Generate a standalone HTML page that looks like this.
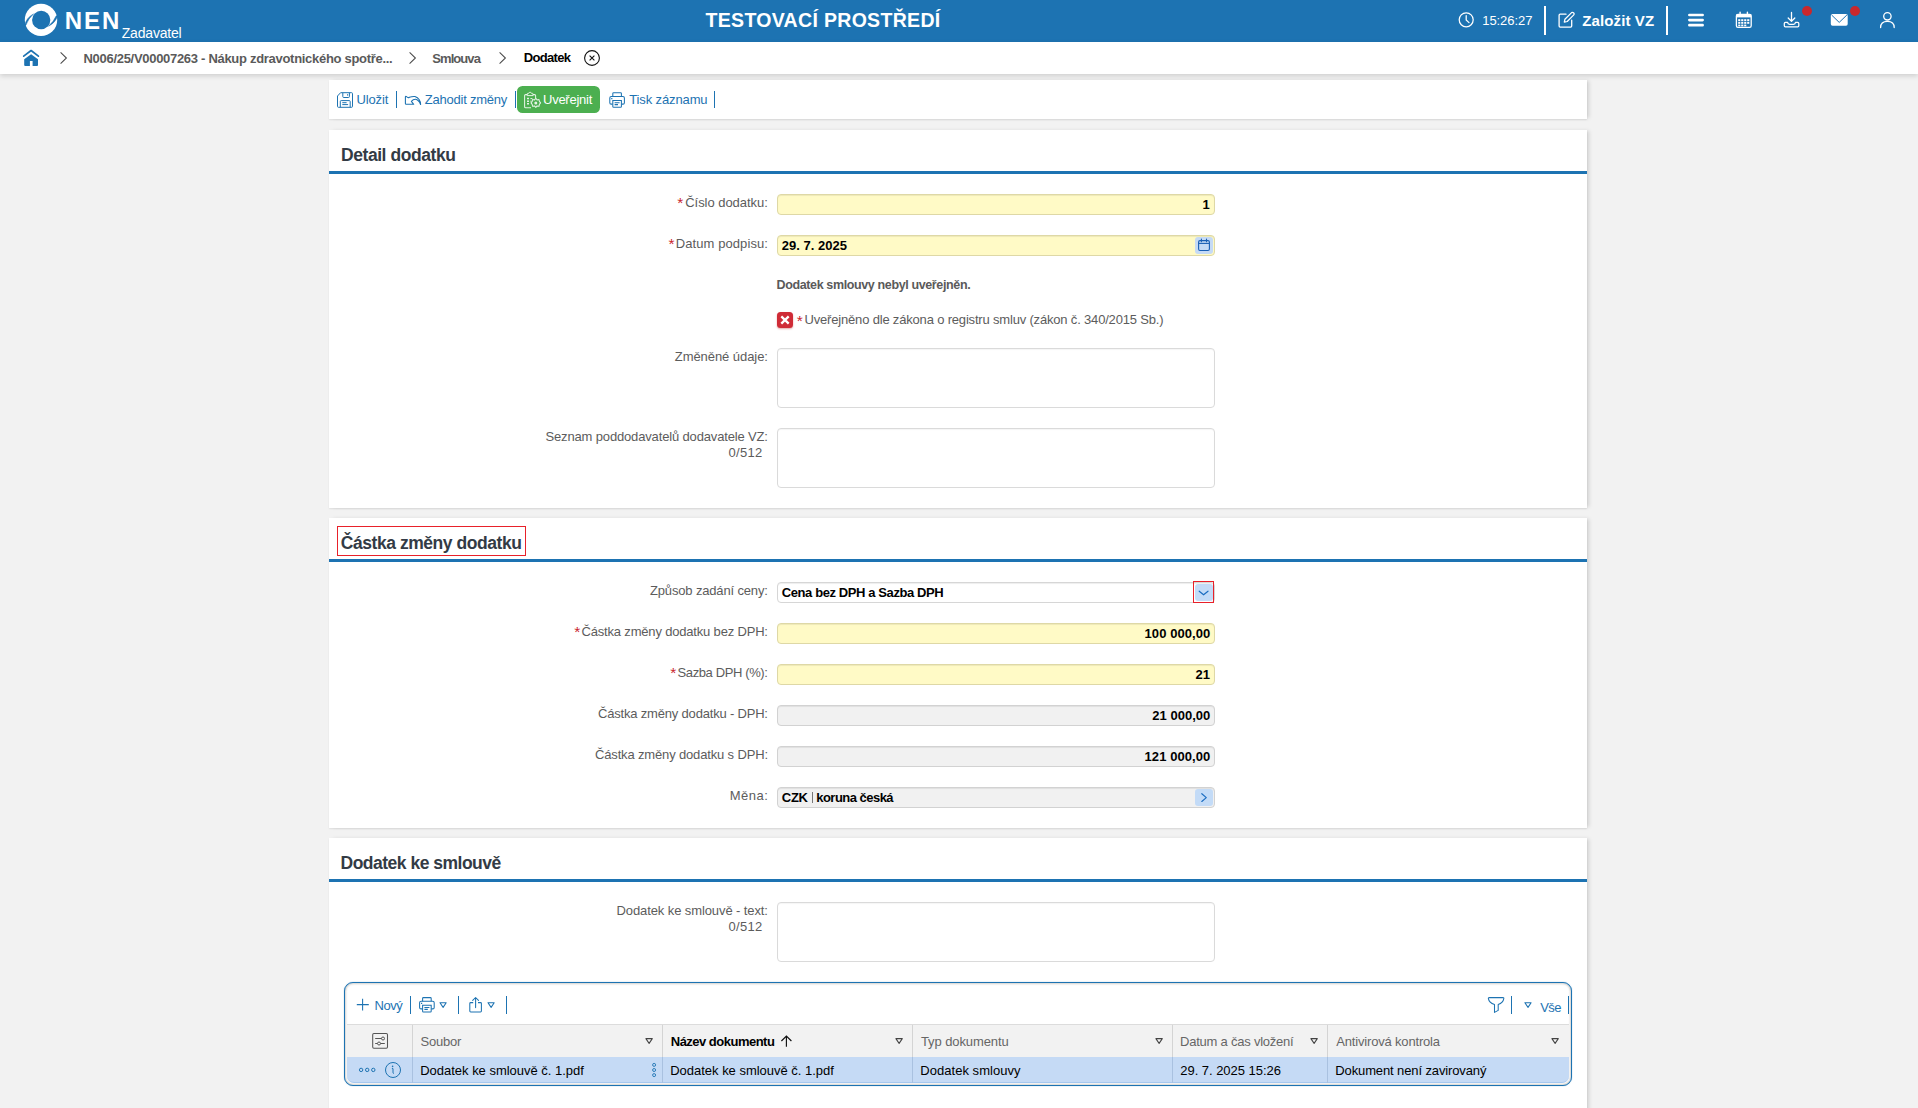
<!DOCTYPE html>
<html lang="cs">
<head>
<meta charset="utf-8">
<title>NEN - Dodatek</title>
<style>
*{box-sizing:border-box;margin:0;padding:0}
html,body{width:1918px;height:1108px;overflow:hidden}
body{background:#f2f2f2;font-family:"Liberation Sans",sans-serif;font-size:13px;color:#555;position:relative}
.a{position:absolute}
.t{position:absolute;white-space:pre;line-height:1;font-family:"Liberation Sans",sans-serif}
svg{position:absolute;overflow:visible}
#hdr{position:absolute;left:0;top:0;width:1918px;height:41.7px;background:#1d73b2}
#bc{position:absolute;left:0;top:41.7px;width:1918px;height:32px;background:#fff;box-shadow:0 2px 5px rgba(0,0,0,.15)}
.panel{position:absolute;left:329px;width:1258px;background:#fff;box-shadow:3px 0 4px -1px rgba(0,0,0,.14),0 1px 1.5px rgba(0,0,0,.08)}
.pline{position:absolute;left:329px;width:1258px;height:3px;background:#1d73b2}
.inp{position:absolute;left:777px;width:438px;height:21px;border:1px solid #d6d6d6;border-radius:4px;background:#fff;box-shadow:inset 0 1px 1px rgba(0,0,0,.07)}
.inp.y{background:#fffac6;border-color:#ded8a6}
.inp.g{background:#f1f1f1;border-color:#d2d2d2}
.ta{position:absolute;left:777px;width:438px;height:60px;border:1px solid #dadada;border-radius:4px;background:#fff;box-shadow:inset 0 1px 1px rgba(0,0,0,.04)}
.vs{position:absolute;width:1px;background:#1d73b2}
.hs{position:absolute;width:2px;background:#fff;top:6px;height:29px}
.cs{position:absolute;width:1px;background:#d4d4d4;top:1025px;height:32px}
.rs{position:absolute;width:1px;background:#a9c1e0;top:1057px;height:26px}
</style>
</head>
<body>
<div id="hdr"></div>
<div id="bc"></div>
<div class="hs" style="left:1544px"></div>
<div class="hs" style="left:1666px"></div>

<!-- toolbar -->
<div class="panel" style="top:80px;height:39px"></div>
<div class="vs" style="left:396px;top:91px;height:17px"></div>
<div class="vs" style="left:515px;top:91px;height:17px"></div>
<div class="vs" style="left:714px;top:91px;height:17px"></div>
<div class="a" style="left:517px;top:85.7px;width:83px;height:27.2px;border-radius:5.5px;background:#4caf50"></div>

<!-- panel 1 -->
<div class="panel" style="top:130px;height:378px"></div>
<div class="pline" style="top:171px"></div>
<div class="inp y" style="top:194px"></div>
<div class="inp y" style="top:235px"></div>
<div class="a" style="left:777px;top:312px;width:16px;height:16px;border-radius:3.5px;background:#cf2b36;box-shadow:0 1px 2px rgba(180,0,0,.35)"></div>
<div class="ta" style="top:348px"></div>
<div class="ta" style="top:428px"></div>

<!-- panel 2 -->
<div class="panel" style="top:518px;height:310px"></div>
<div class="pline" style="top:559px"></div>
<div class="a" style="left:337px;top:526px;width:189px;height:29.5px;border:1px solid #e8212a"></div>
<div class="inp" style="top:582px"></div>
<div class="inp y" style="top:623px"></div>
<div class="inp y" style="top:664px"></div>
<div class="inp g" style="top:705px"></div>
<div class="inp g" style="top:746px"></div>
<div class="inp g" style="top:787px"></div>
<div class="a" style="left:1194.5px;top:584px;width:18px;height:17px;border-radius:3px;background:#c3dbf7"></div>
<div class="a" style="left:1193px;top:581px;width:21px;height:22px;border:1px solid #e8212a"></div>
<div class="a" style="left:1195px;top:789px;width:18px;height:17px;border-radius:3px;background:#c3dbf7"></div>
<div class="a" style="left:811.5px;top:792px;width:1px;height:11px;background:#777"></div>

<!-- panel 3 -->
<div class="panel" style="top:838px;height:290px"></div>
<div class="pline" style="top:879px"></div>
<div class="ta" style="top:902px"></div>

<!-- grid -->
<div class="a" style="left:344px;top:982px;width:1228px;height:104px;border:1px solid #1d73b2;border-radius:9px;background:#fff;box-shadow:inset 0 0 1.5px 1.2px rgba(120,110,100,.28),0 0 1px rgba(29,115,178,.7)"></div>
<div class="a" style="left:347px;top:1024px;width:1222px;height:33px;background:#f2f2f2;border-top:1px solid #dcdcdc"></div>
<div class="a" style="left:347px;top:1057px;width:1222px;height:26.3px;background:#c5daf5;border-bottom:1.3px solid #a6c8ef;border-radius:0 0 7px 7px"></div>
<div class="cs" style="left:412px"></div><div class="cs" style="left:662px"></div><div class="cs" style="left:912px"></div><div class="cs" style="left:1172px"></div><div class="cs" style="left:1327px"></div>
<div class="rs" style="left:412px"></div><div class="rs" style="left:662px"></div><div class="rs" style="left:912px"></div><div class="rs" style="left:1172px"></div><div class="rs" style="left:1327px"></div>
<div class="vs" style="left:410px;top:996px;height:18px"></div>
<div class="vs" style="left:458px;top:996px;height:18px"></div>
<div class="vs" style="left:506px;top:996px;height:18px"></div>
<div class="vs" style="left:1511px;top:996px;height:18px"></div>
<div class="vs" style="left:1568px;top:996px;height:18px"></div>
<!-- logo -->
<svg style="left:24px;top:3px" width="34" height="34" viewBox="24 3 34 34">
 <circle cx="41" cy="19.9" r="16.2" fill="#fff"/>
 <circle cx="41.2" cy="20" r="9.15" fill="#1d73b2"/>
 <path d="M24.3,26.2 Q26.2,17.6 33.6,13.9 Q28.2,18.6 25.9,25.2 Z" fill="#1d73b2" stroke="#1d73b2" stroke-width=".5"/>
 <path d="M57.7,15.4 Q55.8,22.6 48.4,26.3 Q53.8,21.6 56.1,16 Z" fill="#1d73b2" stroke="#1d73b2" stroke-width=".5"/>
</svg>
<!-- home -->
<svg style="left:22px;top:48px" width="18" height="19" viewBox="22 48 18 19">
 <path d="M23.7,56.2 L31.1,50.5 L38.4,56.2" fill="none" stroke="#1d73b2" stroke-width="1.7" stroke-linecap="round" stroke-linejoin="round"/>
 <path d="M31.1,54.2 L38,59.3 V65 Q38,65.9 37.1,65.9 H32.6 V61 H29.9 V65.9 H25.1 Q24.2,65.9 24.2,65 V59.3 Z" fill="#1d73b2"/>
</svg>
<!-- breadcrumb chevrons -->
<svg style="left:59px;top:51px" width="9" height="14" viewBox="0 0 9 14"><path d="M1.6,1.4 L7.4,7 L1.6,12.6" fill="none" stroke="#4a4a4a" stroke-width="1.05"/></svg>
<svg style="left:407.7px;top:51px" width="9" height="14" viewBox="0 0 9 14"><path d="M1.6,1.4 L7.4,7 L1.6,12.6" fill="none" stroke="#4a4a4a" stroke-width="1.05"/></svg>
<svg style="left:497.5px;top:51px" width="9" height="14" viewBox="0 0 9 14"><path d="M1.6,1.4 L7.4,7 L1.6,12.6" fill="none" stroke="#4a4a4a" stroke-width="1.05"/></svg>
<!-- close circle -->
<svg style="left:583px;top:49px" width="18" height="18" viewBox="0 0 18 18"><circle cx="9" cy="9" r="7.4" fill="none" stroke="#111" stroke-width="1.1"/><path d="M6.6,6.6 L11.4,11.4 M11.4,6.6 L6.6,11.4" stroke="#111" stroke-width="1.1" fill="none"/></svg>

<!-- clock -->
<svg style="left:1457px;top:11px" width="18" height="18" viewBox="0 0 18 18"><circle cx="9.2" cy="8.8" r="7" fill="none" stroke="#fff" stroke-width="1.25"/><path d="M9.2,4.6 V9 L12,11.6" fill="none" stroke="#fff" stroke-width="1.25" stroke-linecap="round" stroke-linejoin="round"/></svg>
<!-- edit -->
<svg style="left:1557px;top:11px" width="19" height="18" viewBox="1557 11 19 18">
 <path d="M1566,14.2 H1560.2 Q1559.1,14.2 1559.1,15.3 V26 Q1559.1,27.1 1560.2,27.1 H1570.6 Q1571.7,27.1 1571.7,26 V20.2" fill="none" stroke="#fff" stroke-width="1.3" stroke-linecap="round"/>
 <path d="M1564.3,22.2 L1564.9,19.3 L1571.6,12.6 Q1572.5,11.9 1573.4,12.7 L1573.9,13.2 Q1574.6,14.1 1573.8,14.9 L1567.2,21.5 Z" fill="none" stroke="#fff" stroke-width="1.25" stroke-linejoin="round"/>
</svg>
<!-- hamburger -->
<svg style="left:1688px;top:13px" width="16" height="14" viewBox="0 0 16 14"><path d="M1.4,2 H14.6 M1.4,7.1 H14.6 M1.4,12.2 H14.6" stroke="#fff" stroke-width="2.7" stroke-linecap="round"/></svg>
<!-- calendar -->
<svg style="left:1735px;top:11px" width="18" height="18" viewBox="1735 11 18 18">
 <rect x="1736.4" y="14.4" width="14.8" height="13" rx="1.6" fill="none" stroke="#fff" stroke-width="1.3"/>
 <path d="M1740.1,12.1 V16 M1747.4,12.1 V16" stroke="#fff" stroke-width="1.4" stroke-linecap="round"/>
 <path d="M1736.4,15.9 H1751.2" stroke="#fff" stroke-width="3"/>
 <g fill="#fff"><rect x="1738.2" y="19.2" width="2.1" height="1.9"/><rect x="1741.2" y="19.2" width="2.1" height="1.9"/><rect x="1744.2" y="19.2" width="2.1" height="1.9"/><rect x="1747.2" y="19.2" width="2.1" height="1.9"/>
 <rect x="1738.2" y="21.9" width="2.1" height="1.9"/><rect x="1741.2" y="21.9" width="2.1" height="1.9"/><rect x="1744.2" y="21.9" width="2.1" height="1.9"/><rect x="1747.2" y="21.9" width="2.1" height="1.9"/>
 <rect x="1738.2" y="24.6" width="2.1" height="1.7"/><rect x="1741.2" y="24.6" width="2.1" height="1.7"/><rect x="1744.2" y="24.6" width="2.1" height="1.7"/></g>
</svg>
<!-- download tray -->
<svg style="left:1783px;top:11px" width="18" height="18" viewBox="1783 11 18 18">
 <path d="M1791.5,12.4 V21.2 M1788.2,18 L1791.5,21.4 L1794.8,18" fill="none" stroke="#fff" stroke-width="1.3" stroke-linecap="round" stroke-linejoin="round"/>
 <path d="M1787.6,22.3 H1785.4 Q1784.3,22.3 1784.3,23.4 V25.8 Q1784.3,26.9 1785.4,26.9 H1797.7 Q1798.8,26.9 1798.8,25.8 V23.4 Q1798.8,22.3 1797.7,22.3 H1795.5 Q1795.3,24.3 1793.6,24.3 H1789.5 Q1787.8,24.3 1787.6,22.3 Z" fill="none" stroke="#fff" stroke-width="1.25" stroke-linejoin="round"/>
</svg>
<div class="a" style="left:1801.7px;top:6px;width:10.2px;height:10.2px;border-radius:50%;background:#c9282d"></div>
<!-- mail -->
<svg style="left:1830px;top:13px" width="19" height="14" viewBox="1830 13 19 14">
 <rect x="1830.8" y="14.1" width="16.9" height="11.6" rx="1.7" fill="#fff"/>
 <path d="M1831.6,15 L1839.2,22.4 L1846.9,15" fill="none" stroke="#1d73b2" stroke-width="1"/>
</svg>
<div class="a" style="left:1849.7px;top:6px;width:10.2px;height:10.2px;border-radius:50%;background:#c9282d"></div>
<!-- user -->
<svg style="left:1879px;top:11px" width="17" height="18" viewBox="1879 11 17 18">
 <circle cx="1887.4" cy="16.3" r="3.7" fill="none" stroke="#fff" stroke-width="1.3"/>
 <path d="M1880.6,27.6 Q1880.6,21.4 1887.4,21.4 Q1894.2,21.4 1894.2,27.6" fill="none" stroke="#fff" stroke-width="1.3" stroke-linecap="round"/>
</svg>

<!-- save -->
<svg style="left:336px;top:91px" width="18" height="18" viewBox="336 91 18 18">
 <path d="M337.5,96 L340.6,92.7 H351.6 Q352.5,92.7 352.5,93.6 V106.4 Q352.5,107.3 351.6,107.3 H338.4 Q337.5,107.3 337.5,106.4 Z" fill="none" stroke="#1d73b2" stroke-width="1"/>
 <path d="M342.8,92.9 V96.6 Q342.8,97.5 343.7,97.5 H348.5 Q349.4,97.5 349.4,96.6 V92.9" fill="none" stroke="#1d73b2" stroke-width="1"/>
 <path d="M347.6,94.2 V95.6" stroke="#1d73b2" stroke-width="1"/>
 <path d="M340.3,107.2 V101.5 Q340.3,100.6 341.2,100.6 H349.3 Q350.2,100.6 350.2,101.5 V107.2" fill="none" stroke="#1d73b2" stroke-width="1"/>
 <path d="M342.3,102.7 H346.6 M342.3,104.6 H348.1" stroke="#1d73b2" stroke-width="1"/>
</svg>
<!-- undo -->
<svg style="left:404px;top:94px" width="18" height="12" viewBox="404 94 18 12">
 <path d="M405.4,97 Q405.4,96.1 406.2,96.4 L407.5,97.4 Q408.4,98 409.4,97.2 Q412,96.3 415,96.5 Q420.4,98.4 420.6,104.5 Q418.6,99.7 415.5,99.3 Q413.2,99.2 411.4,101.3 L413.7,104.3 H406.1 Q405.4,104.3 405.4,103.6 Z" fill="none" stroke="#1d73b2" stroke-width="1.1" stroke-linejoin="round"/>
</svg>
<!-- clipboard gear -->
<svg style="left:523px;top:91px" width="18" height="18" viewBox="523 91 18 18" opacity=".85">
 <path d="M527.3,94.6 H525.6 Q524.6,94.6 524.6,95.6 V106.8 Q524.6,107.8 525.6,107.8 H531" fill="none" stroke="#fff" stroke-width="1.05"/>
 <path d="M533,94.6 H534.6 Q535.6,94.6 535.6,95.6 V98.2" fill="none" stroke="#fff" stroke-width="1.05"/>
 <path d="M527.2,95.6 V94 Q527.2,93.3 528,93.3 H528.8 Q529.2,92.2 530.1,92.2 Q531,92.2 531.4,93.3 H532.2 Q533,93.3 533,94 V95.6 Z" fill="none" stroke="#fff" stroke-width="1"/>
 <path d="M527,98.6 H529 M527,101.2 H529 M527,103.8 H529" stroke="#fff" stroke-width="1.5"/>
 <path d="M530.4,98.6 H532.4 M530.4,101.2 H531.4" stroke="#fff" stroke-width="1"/>
 <path d="M535.8,98.4 L537.1,99.9 L539,99.5 L539.4,101.4 L540.6,102.9 L539.4,104.4 L539,106.3 L537.1,105.9 L535.8,107.4 L534.5,105.9 L532.6,106.3 L532.2,104.4 L531,102.9 L532.2,101.4 L532.6,99.5 L534.5,99.9 Z" fill="none" stroke="#fff" stroke-width="1.05" stroke-linejoin="round"/>
 <circle cx="535.8" cy="102.9" r="1.5" fill="#fff"/>
</svg>
<!-- printer (toolbar) -->
<svg style="left:608px;top:91px" width="18" height="18" viewBox="608 91 18 18">
 <g fill="none" stroke="#1d73b2" stroke-width="1.05">
 <path d="M612.8,96.4 V93.6 Q612.8,92.8 613.6,92.8 H620.6 Q621.4,92.8 621.4,93.6 V96.4"/>
 <path d="M612.8,104.1 H611.2 Q609.8,104.1 609.8,102.7 V98 Q609.8,96.5 611.3,96.5 H622.9 Q624.4,96.5 624.4,98 V102.7 Q624.4,104.1 623,104.1 H621.4"/>
 <path d="M612.8,100.5 H621.4 V106.4 Q621.4,107.2 620.6,107.2 H613.6 Q612.8,107.2 612.8,106.4 Z" fill="#fff"/>
 <path d="M614.6,102.7 H619.6 M614.6,104.6 H618"/>
 <path d="M611.2,98.6 H612.4"/>
 </g>
</svg>
<!-- printer (grid) -->
<svg style="left:418px;top:996px" width="18" height="18" viewBox="608.2 91.2 18 18"><g fill="none" stroke="#1d73b2" stroke-width="1.05">
 <path d="M612.8,96.4 V93.6 Q612.8,92.8 613.6,92.8 H620.6 Q621.4,92.8 621.4,93.6 V96.4"/>
 <path d="M612.8,104.1 H611.2 Q609.8,104.1 609.8,102.7 V98 Q609.8,96.5 611.3,96.5 H622.9 Q624.4,96.5 624.4,98 V102.7 Q624.4,104.1 623,104.1 H621.4"/>
 <path d="M612.8,100.5 H621.4 V106.4 Q621.4,107.2 620.6,107.2 H613.6 Q612.8,107.2 612.8,106.4 Z" fill="#fff"/>
 <path d="M614.6,102.7 H619.6 M614.6,104.6 H618"/>
 <path d="M611.2,98.6 H612.4"/>
 </g></svg>

<!-- date calendar btn -->
<div class="a" style="left:1195.2px;top:237px;width:17.7px;height:17px;border-radius:3px;background:#c5daf5"></div>
<svg style="left:1196px;top:237px" width="16" height="16" viewBox="1196 237 16 16">
 <rect x="1198.6" y="240.6" width="10.8" height="9.9" rx="1.4" fill="none" stroke="#1a5fb4" stroke-width="1.1"/>
 <path d="M1198.6,243.4 H1209.4" stroke="#1a5fb4" stroke-width="1.1"/>
 <path d="M1201.4,239 V241.8 M1206.5,239 V241.8" stroke="#1a5fb4" stroke-width="1.1" stroke-linecap="round"/>
</svg>
<!-- red X -->
<svg style="left:777px;top:312px" width="16" height="16" viewBox="0 0 16 16"><path d="M4.3,4.4 L11.7,11.6 M11.7,4.4 L4.3,11.6" stroke="#fff" stroke-width="2.3"/></svg>
<!-- select chevron down -->
<svg style="left:1196px;top:586px" width="16" height="14" viewBox="1196 586 16 14"><path d="M1199.2,591.2 L1203.6,594.8 L1208,591.2" fill="none" stroke="#1a6cc0" stroke-width="1.15" stroke-linecap="round" stroke-linejoin="round"/></svg>
<!-- currency chevron right -->
<svg style="left:1196px;top:790px" width="16" height="16" viewBox="1196 790 16 16"><path d="M1201.8,793.7 L1206.3,797.6 L1201.8,801.5" fill="none" stroke="#1a6cc0" stroke-width="1.15" stroke-linecap="round" stroke-linejoin="round"/></svg>

<!-- grid toolbar: plus -->
<svg style="left:356px;top:998px" width="14" height="14" viewBox="356 998 14 14"><path d="M356.8,1004.6 H368.8 M362.6,998.8 V1010.5" stroke="#1d73b2" stroke-width="1.05"/></svg>
<!-- triangles -->
<svg style="left:439px;top:1001px" width="9" height="8" viewBox="0 0 9 8"><path d="M1,1.8 H7.2 L4.1,6.4 Z" fill="none" stroke="#1d73b2" stroke-width="1.05" stroke-linejoin="round"/></svg>
<svg style="left:487px;top:1001px" width="9" height="8" viewBox="0 0 9 8"><path d="M1,1.8 H7.2 L4.1,6.4 Z" fill="none" stroke="#1d73b2" stroke-width="1.05" stroke-linejoin="round"/></svg>
<svg style="left:1524px;top:1001px" width="9" height="8" viewBox="0 0 9 8"><path d="M0.9,1.8 H7.1 L4,6.4 Z" fill="none" stroke="#1d73b2" stroke-width="1.05" stroke-linejoin="round"/></svg>
<!-- export -->
<svg style="left:468px;top:996px" width="16" height="18" viewBox="468 996 16 18">
 <path d="M473.2,1002.6 H470.7 Q469.8,1002.6 469.8,1003.5 V1011.1 Q469.8,1012 470.7,1012 H480.5 Q481.4,1012 481.4,1011.1 V1003.5 Q481.4,1002.6 480.5,1002.6 H478" fill="none" stroke="#1d73b2" stroke-width="1.05"/>
 <path d="M475.6,1007.6 V997.6 M472.7,1000.4 L475.6,997.5 L478.5,1000.4" fill="none" stroke="#1d73b2" stroke-width="1.05" stroke-linejoin="round" stroke-linecap="round"/>
</svg>
<!-- filter -->
<svg style="left:1487px;top:996px" width="18" height="18" viewBox="1487 996 18 18">
 <path d="M1489.2,997.6 H1503 Q1504,997.6 1503.8,998.6 Q1503.2,1002.6 1498.2,1004.6 V1010.4 L1494.5,1012.4 V1004.6 Q1489,1002.6 1488.4,998.6 Q1488.2,997.6 1489.2,997.6 Z" fill="none" stroke="#1d73b2" stroke-width="1.05" stroke-linejoin="round"/>
</svg>
<!-- settings -->
<svg style="left:371px;top:1032px" width="18" height="18" viewBox="371 1032 18 18">
 <rect x="372.7" y="1033.5" width="14.8" height="14.8" rx="1.2" fill="none" stroke="#555" stroke-width="1.05"/>
 <path d="M375.2,1038.5 H381.4 M375.2,1043.5 H377.4 M380.6,1043.5 H384.8" stroke="#555" stroke-width="1"/>
 <circle cx="383" cy="1038.5" r="1.5" fill="none" stroke="#555" stroke-width="1"/>
 <circle cx="379" cy="1043.5" r="1.5" fill="none" stroke="#555" stroke-width="1"/>
</svg>
<!-- header filter triangles -->
<svg style="left:645px;top:1037px" width="9" height="8" viewBox="0 0 9 8"><path d="M0.9,1.6 H7.3 L4.1,6.4 Z" fill="none" stroke="#444" stroke-width="1.05" stroke-linejoin="round"/></svg>
<svg style="left:895px;top:1037px" width="9" height="8" viewBox="0 0 9 8"><path d="M0.9,1.6 H7.3 L4.1,6.4 Z" fill="none" stroke="#444" stroke-width="1.05" stroke-linejoin="round"/></svg>
<svg style="left:1155px;top:1037px" width="9" height="8" viewBox="0 0 9 8"><path d="M0.9,1.6 H7.3 L4.1,6.4 Z" fill="none" stroke="#444" stroke-width="1.05" stroke-linejoin="round"/></svg>
<svg style="left:1310px;top:1037px" width="9" height="8" viewBox="0 0 9 8"><path d="M0.9,1.6 H7.3 L4.1,6.4 Z" fill="none" stroke="#444" stroke-width="1.05" stroke-linejoin="round"/></svg>
<svg style="left:1550.5px;top:1037px" width="9" height="8" viewBox="0 0 9 8"><path d="M0.9,1.6 H7.3 L4.1,6.4 Z" fill="none" stroke="#444" stroke-width="1.05" stroke-linejoin="round"/></svg>
<!-- sort arrow -->
<svg style="left:780px;top:1035px" width="13" height="13" viewBox="780 1035 13 13"><path d="M786.4,1046.8 V1036.2 M781.4,1041 L786.4,1036 L791.4,1041" fill="none" stroke="#111" stroke-width="1.15"/></svg>
<!-- row icons -->
<svg style="left:358px;top:1066px" width="18" height="8" viewBox="358 1066 18 8"><g fill="none" stroke="#1d73b2" stroke-width="1"><circle cx="361.1" cy="1069.9" r="1.7"/><circle cx="367.2" cy="1069.9" r="1.7"/><circle cx="373.3" cy="1069.9" r="1.7"/></g></svg>
<svg style="left:384px;top:1061px" width="18" height="18" viewBox="384 1061 18 18"><circle cx="393" cy="1070" r="7.5" fill="none" stroke="#1d73b2" stroke-width="1"/><circle cx="392.6" cy="1066.4" r=".8" fill="#1d73b2"/><path d="M391.9,1068.6 H393 V1072.6 Q393,1073.4 394,1073.4" fill="none" stroke="#1d73b2" stroke-width="1"/></svg>
<svg style="left:651px;top:1062px" width="7" height="16" viewBox="651 1062 7 16"><g fill="none" stroke="#1d73b2" stroke-width=".9"><circle cx="654.1" cy="1064.9" r="1.5"/><circle cx="654.1" cy="1070" r="1.5"/><circle cx="654.1" cy="1075.1" r="1.5"/></g></svg>

<!-- texts -->
<div class="t" style="left:64.75px;top:9.00px;font-size:24px;font-weight:bold;color:#fff;letter-spacing:2.000px;">NEN</div>
<div class="t" style="left:121.75px;top:26.00px;font-size:14px;color:#fff;letter-spacing:-0.188px;">Zadavatel</div>
<div class="t" style="left:705.50px;top:11.00px;font-size:19.5px;font-weight:bold;color:#fff;letter-spacing:0.319px;">TESTOVACÍ PROSTŘEDÍ</div>
<div class="t" style="left:1482.25px;top:14.00px;font-size:13px;color:#fff;letter-spacing:-0.071px;">15:26:27</div>
<div class="t" style="left:1582.25px;top:13.00px;font-size:15px;font-weight:bold;color:#fff;letter-spacing:0.111px;">Založit VZ</div>
<div class="t" style="left:83.50px;top:52.00px;font-size:13px;font-weight:bold;color:#5a5a5a;letter-spacing:-0.296px;">N006/25/V00007263 - Nákup zdravotnického spotře...</div>
<div class="t" style="left:432.25px;top:52.00px;font-size:13px;font-weight:bold;color:#5a5a5a;letter-spacing:-0.925px;">Smlouva</div>
<div class="t" style="left:523.75px;top:51.00px;font-size:13px;font-weight:bold;color:#000;letter-spacing:-0.683px;">Dodatek</div>
<div class="t" style="left:356.50px;top:93.00px;font-size:13px;color:#1d73b2;letter-spacing:-0.150px;">Uložit</div>
<div class="t" style="left:424.75px;top:93.00px;font-size:13px;color:#1d73b2;letter-spacing:-0.229px;">Zahodit změny</div>
<div class="t" style="left:543.00px;top:93.00px;font-size:13px;color:#fff;letter-spacing:-0.250px;">Uveřejnit</div>
<div class="t" style="left:629.25px;top:93.00px;font-size:13px;color:#1d73b2;letter-spacing:-0.123px;">Tisk záznamu</div>
<div class="t" style="left:341.00px;top:147.00px;font-size:17.5px;font-weight:bold;color:#333b45;letter-spacing:-0.438px;">Detail dodatku</div>
<div class="t" style="left:685.25px;top:196.00px;font-size:13px;color:#5c5c5c;letter-spacing:-0.042px;">Číslo dodatku:</div>
<div class="t" style="left:677.25px;top:195.00px;font-size:15.5px;color:#c9252d;">*</div>
<div class="t" style="left:1202.50px;top:198.00px;font-size:13px;font-weight:bold;color:#000;">1</div>
<div class="t" style="left:675.75px;top:237.00px;font-size:13px;color:#5c5c5c;letter-spacing:0.085px;">Datum podpisu:</div>
<div class="t" style="left:668.50px;top:236.00px;font-size:15.5px;color:#c9252d;">*</div>
<div class="t" style="left:781.75px;top:239.00px;font-size:13px;font-weight:bold;color:#000;letter-spacing:0.025px;">29. 7. 2025</div>
<div class="t" style="left:776.50px;top:279.00px;font-size:12.5px;font-weight:bold;color:#5a5a5a;letter-spacing:-0.371px;">Dodatek smlouvy nebyl uveřejněn.</div>
<div class="t" style="left:796.75px;top:313.00px;font-size:15.5px;color:#c9252d;">*</div>
<div class="t" style="left:804.50px;top:313.00px;font-size:13px;color:#5c5c5c;letter-spacing:-0.179px;">Uveřejněno dle zákona o registru smluv (zákon č. 340/2015 Sb.)</div>
<div class="t" style="left:674.75px;top:350.00px;font-size:13px;color:#5c5c5c;letter-spacing:-0.058px;">Změněné údaje:</div>
<div class="t" style="left:545.50px;top:430.00px;font-size:13px;color:#5c5c5c;letter-spacing:-0.154px;">Seznam poddodavatelů dodavatele VZ:</div>
<div class="t" style="left:728.50px;top:446.00px;font-size:13px;color:#5c5c5c;letter-spacing:0.288px;">0/512</div>
<div class="t" style="left:340.75px;top:535.00px;font-size:17.5px;font-weight:bold;color:#333b45;letter-spacing:-0.447px;">Částka změny dodatku</div>
<div class="t" style="left:650.00px;top:584.00px;font-size:13px;color:#5c5c5c;letter-spacing:-0.156px;">Způsob zadání ceny:</div>
<div class="t" style="left:781.75px;top:586.00px;font-size:13px;font-weight:bold;color:#000;letter-spacing:-0.402px;">Cena bez DPH a Sazba DPH</div>
<div class="t" style="left:581.50px;top:625.00px;font-size:13px;color:#5c5c5c;letter-spacing:-0.179px;">Částka změny dodatku bez DPH:</div>
<div class="t" style="left:574.25px;top:624.00px;font-size:15.5px;color:#c9252d;">*</div>
<div class="t" style="left:1144.50px;top:627.00px;font-size:13px;font-weight:bold;color:#000;letter-spacing:0.083px;">100 000,00</div>
<div class="t" style="left:677.50px;top:666.00px;font-size:13px;color:#5c5c5c;letter-spacing:-0.385px;">Sazba DPH (%):</div>
<div class="t" style="left:670.25px;top:665.00px;font-size:15.5px;color:#c9252d;">*</div>
<div class="t" style="left:1195.50px;top:668.00px;font-size:13px;font-weight:bold;color:#000;letter-spacing:0.100px;">21</div>
<div class="t" style="left:598.00px;top:707.00px;font-size:13px;color:#5c5c5c;letter-spacing:-0.187px;">Částka změny dodatku - DPH:</div>
<div class="t" style="left:1152.25px;top:709.00px;font-size:13px;font-weight:bold;color:#000;letter-spacing:0.019px;">21 000,00</div>
<div class="t" style="left:595.00px;top:748.00px;font-size:13px;color:#5c5c5c;letter-spacing:-0.154px;">Částka změny dodatku s DPH:</div>
<div class="t" style="left:1144.50px;top:750.00px;font-size:13px;font-weight:bold;color:#000;letter-spacing:0.083px;">121 000,00</div>
<div class="t" style="left:729.75px;top:789.00px;font-size:13px;color:#5c5c5c;letter-spacing:0.500px;">Měna:</div>
<div class="t" style="left:781.75px;top:791.00px;font-size:13px;font-weight:bold;color:#000;letter-spacing:-0.250px;">CZK</div>
<div class="t" style="left:816.25px;top:791.00px;font-size:13px;font-weight:bold;color:#000;letter-spacing:-0.523px;">koruna česká</div>
<div class="t" style="left:340.50px;top:855.00px;font-size:17.5px;font-weight:bold;color:#333b45;letter-spacing:-0.497px;">Dodatek ke smlouvě</div>
<div class="t" style="left:616.50px;top:904.00px;font-size:13px;color:#5c5c5c;letter-spacing:-0.098px;">Dodatek ke smlouvě - text:</div>
<div class="t" style="left:728.50px;top:920.00px;font-size:13px;color:#5c5c5c;letter-spacing:0.288px;">0/512</div>
<div class="t" style="left:374.50px;top:999.00px;font-size:13px;color:#1d73b2;letter-spacing:-0.417px;">Nový</div>
<div class="t" style="left:1540.25px;top:1001.00px;font-size:13px;color:#1d73b2;letter-spacing:-0.625px;">Vše</div>
<div class="t" style="left:420.50px;top:1035.00px;font-size:13px;color:#666;letter-spacing:-0.200px;">Soubor</div>
<div class="t" style="left:670.75px;top:1035.00px;font-size:13px;font-weight:bold;color:#000;letter-spacing:-0.511px;">Název dokumentu</div>
<div class="t" style="left:921.00px;top:1035.00px;font-size:13px;color:#666;letter-spacing:-0.104px;">Typ dokumentu</div>
<div class="t" style="left:1180.00px;top:1035.00px;font-size:13px;color:#666;letter-spacing:-0.225px;">Datum a čas vložení</div>
<div class="t" style="left:1336.25px;top:1035.00px;font-size:13px;color:#666;letter-spacing:-0.175px;">Antivirová kontrola</div>
<div class="t" style="left:420.25px;top:1064.00px;font-size:13px;color:#000;letter-spacing:-0.019px;">Dodatek ke smlouvě č. 1.pdf</div>
<div class="t" style="left:670.25px;top:1064.00px;font-size:13px;color:#000;letter-spacing:-0.019px;">Dodatek ke smlouvě č. 1.pdf</div>
<div class="t" style="left:920.25px;top:1064.00px;font-size:13px;color:#000;letter-spacing:0.039px;">Dodatek smlouvy</div>
<div class="t" style="left:1180.25px;top:1064.00px;font-size:13px;color:#000;letter-spacing:-0.031px;">29. 7. 2025 15:26</div>
<div class="t" style="left:1335.25px;top:1064.00px;font-size:13px;color:#000;letter-spacing:-0.117px;">Dokument není zavirovaný</div>
</body>
</html>
